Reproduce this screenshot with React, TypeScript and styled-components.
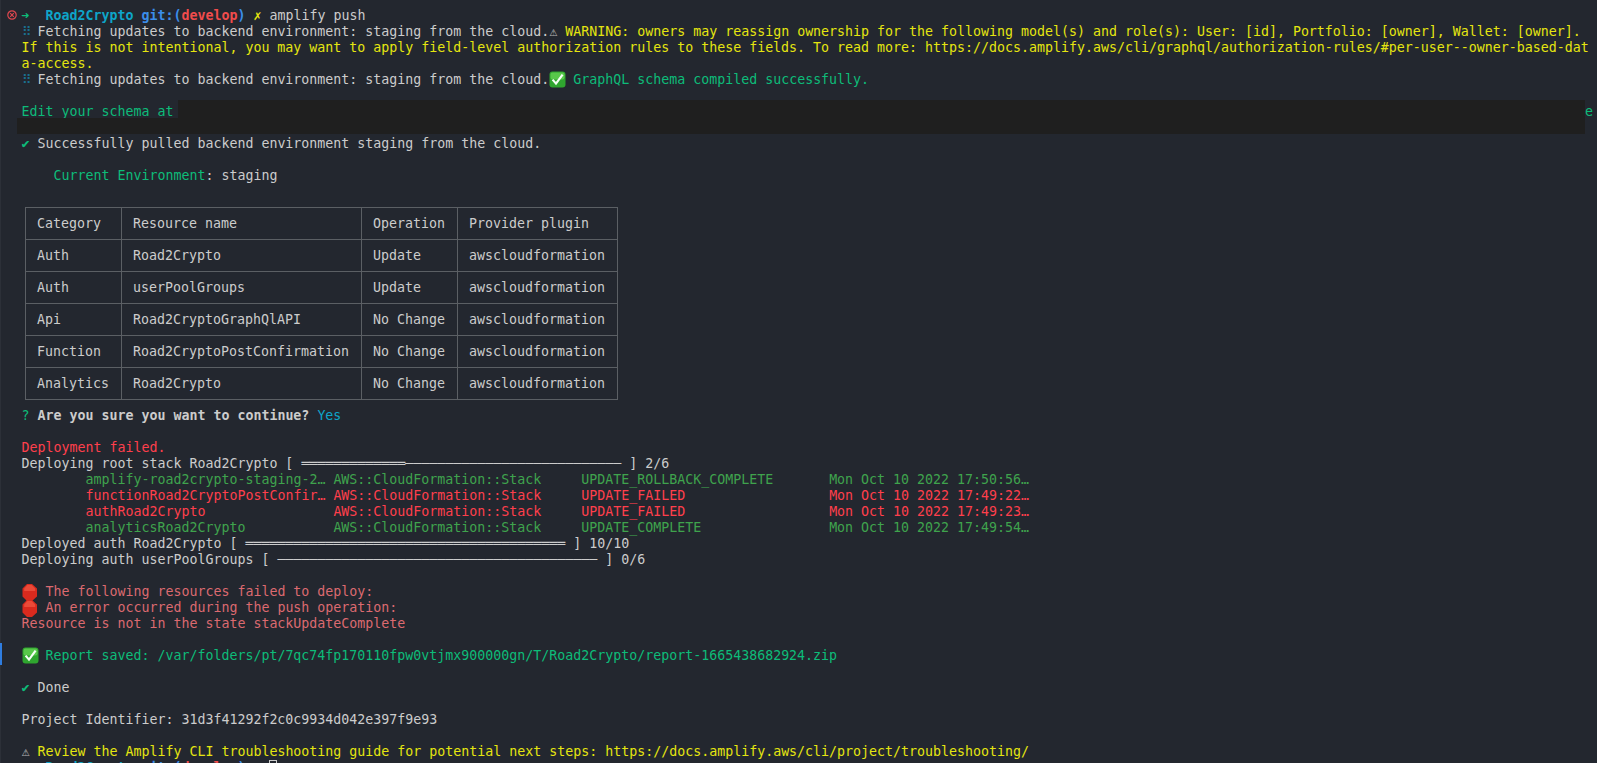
import styled, { createGlobalStyle } from "styled-components";

type Tone =
  | "text"
  | "cyan"
  | "blue"
  | "red"
  | "yellow"
  | "green"
  | "okGreen"
  | "failRed"
  | "softRed"
  | "spinner"
  | "muted";

const tones: Record<Tone, string> = {
  text: "#cccccc",
  cyan: "#0ea5c9",
  blue: "#3b8eea",
  red: "#f14c4c",
  yellow: "#e5e510",
  green: "#0dbc79",
  okGreen: "#3fa34d",
  failRed: "#ff3f4c",
  softRed: "#dc6a70",
  spinner: "#1a6f8f",
  muted: "#b5b5b5",
};

const GlobalStyle = createGlobalStyle`
  html, body {
    margin: 0;
    height: 763px;
    overflow: hidden;
    background: #23272f;
  }
`;

const Terminal = styled.main`
  position: relative;
  box-sizing: border-box;
  height: 763px;
  overflow: hidden;
  padding: 8px 0 0 21.5px;
  background: #23272f;
  box-shadow: inset 1px 0 0 #2c3038;
  color: #cccccc;
  font-family: "DejaVu Sans Mono", monospace;
  font-size: 13.29px;
  line-height: 16px;
  font-variant-ligatures: none;
`;

const GutterMark = styled.div`
  position: absolute;
  left: 0;
  top: 643px;
  width: 2px;
  height: 22px;
  background: #2f7de0;
`;

const ErrorDot = styled.svg`
  position: absolute;
  left: 7px;
  top: 10px;
  width: 10px;
  height: 10px;
`;

const Line = styled.div<{ $indent?: number }>`
  position: relative;
  height: 16px;
  white-space: pre;
  padding-left: ${(p) => (p.$indent ?? 0) * 8}px;
`;

const SpacedLine = styled(Line)`
  display: flex;
  justify-content: space-between;
  padding-right: 4px;
`;

const T = styled.span<{ $tone?: Tone; $bold?: boolean }>`
  color: ${(p) => tones[p.$tone ?? "text"]};
  font-weight: ${(p) => (p.$bold ? 700 : 400)};
`;

const Spinner = styled.span`
  display: inline-block;
  width: 8px;
  color: ${tones.spinner};
`;

const Emoji = styled.span`
  display: inline-block;
  width: 16px;
  height: 16px;
  vertical-align: top;
`;

const EmojiSvg = styled.svg`
  display: block;
  margin-top: -1px;
  width: 17px;
  height: 17px;
`;

const StopSvg = styled.svg`
  display: block;
  width: 16px;
  height: 17px;
`;

const Redaction = styled.div`
  position: absolute;
  background: #1f1f1f;
`;

const RedactionWide = styled(Redaction)`
  left: 156.5px;
  top: -4px;
  width: 1407px;
  height: 34px;
`;

const RedactionLeft = styled(Redaction)`
  left: -4.5px;
  top: 14px;
  width: 161px;
  height: 16px;
`;

const Cursor = styled.span`
  display: inline-block;
  box-sizing: border-box;
  width: 8px;
  height: 16px;
  vertical-align: top;
  border: 1px solid #cccccc;
`;

const ResourceTable = styled.table`
  border-collapse: collapse;
  table-layout: fixed;
  width: 592px;
  margin: 7px 0 8px 3.5px;
`;

const Cell = styled.td<{ $col: number }>`
  box-sizing: border-box;
  width: ${(p) => [96, 240, 96, 160][p.$col]}px;
  height: 32px;
  padding: 0 11px;
  border: 1px solid #5b5f64;
  white-space: pre;
  color: #cccccc;
`;

function CheckEmoji() {
  return (
    <Emoji>
      <EmojiSvg viewBox="0 0 17 17">
        <rect x="0.5" y="0.5" width="16" height="16" rx="3" fill="#2fa52f" />
        <rect x="1.5" y="1.5" width="14" height="7" rx="2" fill="#58c84a" />
        <path d="M3.6 8.6 7 12.6 13.6 3.6" fill="none" stroke="#f4fff4" strokeWidth="2.2" />
      </EmojiSvg>
    </Emoji>
  );
}

function StopEmoji() {
  return (
    <Emoji>
      <StopSvg viewBox="0 0 16 17">
        <path d="M5 0h5l5 4.5v8L10 17H5L.5 12.5v-8Z" fill="#d92a1e" />
        <path d="M5.4 1h4.2l3.6 3.4v2.6H2.2V4.4Z" fill="#ea4a38" />
      </StopSvg>
    </Emoji>
  );
}

function Prompt({ children }: { children?: React.ReactNode }) {
  return (
    <Line>
      <T $tone="green" $bold>
        {"➜  "}
      </T>
      <T $tone="cyan" $bold>
        Road2Crypto{" "}
      </T>
      <T $tone="blue" $bold>
        {"git:("}
      </T>
      <T $tone="red" $bold>
        develop
      </T>
      <T $tone="blue" $bold>
        {")"}
      </T>
      <T $tone="yellow" $bold>
        {" ✗ "}
      </T>
      {children}
    </Line>
  );
}

const fetching = "Fetching updates to backend environment: staging from the cloud.";

const resources = [
  ["Category", "Resource name", "Operation", "Provider plugin"],
  ["Auth", "Road2Crypto", "Update", "awscloudformation"],
  ["Auth", "userPoolGroups", "Update", "awscloudformation"],
  ["Api", "Road2CryptoGraphQlAPI", "No Change", "awscloudformation"],
  ["Function", "Road2CryptoPostConfirmation", "No Change", "awscloudformation"],
  ["Analytics", "Road2Crypto", "No Change", "awscloudformation"],
];

const stackRows: { text: string; tone: Tone }[] = [
  {
    text: "amplify-road2crypto-staging-2… AWS::CloudFormation::Stack     UPDATE_ROLLBACK_COMPLETE       Mon Oct 10 2022 17:50:56…",
    tone: "okGreen",
  },
  {
    text: "functionRoad2CryptoPostConfir… AWS::CloudFormation::Stack     UPDATE_FAILED                  Mon Oct 10 2022 17:49:22…",
    tone: "failRed",
  },
  {
    text: "authRoad2Crypto                AWS::CloudFormation::Stack     UPDATE_FAILED                  Mon Oct 10 2022 17:49:23…",
    tone: "failRed",
  },
  {
    text: "analyticsRoad2Crypto           AWS::CloudFormation::Stack     UPDATE_COMPLETE                Mon Oct 10 2022 17:49:54…",
    tone: "okGreen",
  },
];

export default function App() {
  return (
    <Terminal>
      <GlobalStyle />
      <GutterMark />
      <ErrorDot viewBox="0 0 10 10">
        <circle cx="5" cy="5" r="4.2" fill="none" stroke="#e0474f" strokeWidth="1.2" />
        <path d="M3.2 3.2 6.8 6.8M6.8 3.2 3.2 6.8" stroke="#e0474f" strokeWidth="1.2" />
      </ErrorDot>

      <Prompt>amplify push</Prompt>
      <Line>
        <Spinner>⠿</Spinner>
        {" " + fetching}
        <T $tone="muted">⚠</T>
        <T $tone="yellow">
          {" WARNING: owners may reassign ownership for the following model(s) and role(s): User: [id], Portfolio: [owner], Wallet: [owner]."}
        </T>
      </Line>
      <Line>
        <T $tone="yellow">
          If this is not intentional, you may want to apply field-level authorization rules to these fields. To read more: https://docs.amplify.aws/cli/graphql/authorization-rules/#per-user--owner-based-dat
        </T>
      </Line>
      <Line>
        <T $tone="yellow">a-access.</T>
      </Line>
      <Line>
        <Spinner>⠿</Spinner>
        {" " + fetching}
        <CheckEmoji />
        <T $tone="green"> GraphQL schema compiled successfully.</T>
      </Line>
      <Line />
      <SpacedLine>
        <T $tone="green">Edit your schema at</T>
        <T $tone="green">e</T>
        <RedactionWide />
        <RedactionLeft />
      </SpacedLine>
      <Line />
      <Line>
        <T $tone="green">✔</T> Successfully pulled backend environment staging from the cloud.
      </Line>
      <Line />
      <Line $indent={4}>
        <T $tone="green">Current Environment</T>: staging
      </Line>
      <Line />

      <ResourceTable>
        <tbody>
          {resources.map((row, i) => (
            <tr key={i}>
              {row.map((cell, col) => (
                <Cell key={col} $col={col}>
                  {cell}
                </Cell>
              ))}
            </tr>
          ))}
        </tbody>
      </ResourceTable>

      <Line>
        <T $tone="green">?</T> <T $bold>Are you sure you want to continue?</T> <T $tone="cyan">Yes</T>
      </Line>
      <Line />
      <Line>
        <T $tone="failRed">Deployment failed.</T>
      </Line>
      <Line>Deploying root stack Road2Crypto [ {"═".repeat(13) + "─".repeat(27)} ] 2/6</Line>
      {stackRows.map((row) => (
        <Line key={row.text} $indent={8}>
          <T $tone={row.tone}>{row.text}</T>
        </Line>
      ))}
      <Line>Deployed auth Road2Crypto [ {"═".repeat(40)} ] 10/10</Line>
      <Line>Deploying auth userPoolGroups [ {"─".repeat(40)} ] 0/6</Line>
      <Line />
      <Line>
        <StopEmoji />
        <T $tone="softRed"> The following resources failed to deploy:</T>
      </Line>
      <Line>
        <StopEmoji />
        <T $tone="softRed"> An error occurred during the push operation:</T>
      </Line>
      <Line>
        <T $tone="softRed">Resource is not in the state stackUpdateComplete</T>
      </Line>
      <Line />
      <Line>
        <CheckEmoji />
        <T $tone="green"> Report saved: /var/folders/pt/7qc74fp170110fpw0vtjmx900000gn/T/Road2Crypto/report-1665438682924.zip</T>
      </Line>
      <Line />
      <Line>
        <T $tone="green">✔</T> Done
      </Line>
      <Line />
      <Line>Project Identifier: 31d3f41292f2c0c9934d042e397f9e93</Line>
      <Line />
      <Line>
        <T $tone="muted">⚠</T>{" "}
        <T $tone="yellow">
          Review the Amplify CLI troubleshooting guide for potential next steps: https://docs.amplify.aws/cli/project/troubleshooting/
        </T>
      </Line>
      <Prompt>
        <Cursor />
      </Prompt>
    </Terminal>
  );
}
